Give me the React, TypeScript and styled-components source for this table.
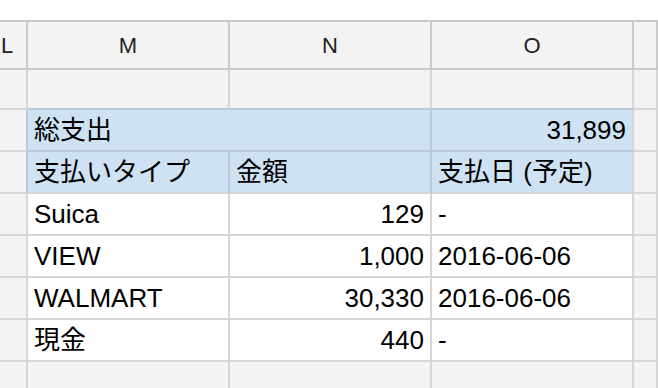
import React from "react";
import styled, { createGlobalStyle } from "styled-components";

const GRID = "#d6d6d6";
const HEAD_LINE = "#c9c9c9";
const BLUE = "#cfe2f3";
const BLUE_LINE = "#b9c9da";
const GRAY = "#f3f3f3";

const Global = createGlobalStyle`
  html, body { margin: 0; padding: 0; overflow: hidden; background: #fff; }
  body { font-family: "Liberation Sans", Arial, "Noto Sans CJK JP", sans-serif; }
`;

const Page = styled.div`
  padding-top: 20px;
  width: 658px;
  height: 388px;
  box-sizing: border-box;
`;

const Sheet = styled.div`
  display: grid;
  grid-template-columns: 28px 202px 202px 202px 1fr;
  grid-template-rows: 48px 40px repeat(7, 42px);
  border-top: 2px solid ${HEAD_LINE};
`;

type Align = "start" | "end" | "center";

const HeaderCell = styled.div<{ $align?: Align }>`
  box-sizing: border-box;
  display: flex;
  align-items: center;
  justify-content: ${(p) => (p.$align === "start" ? "flex-start" : "center")};
  padding-left: ${(p) => (p.$align === "start" ? "1px" : "0")};
  background: ${GRAY};
  border-right: 2px solid ${HEAD_LINE};
  border-bottom: 2px solid ${HEAD_LINE};
  font-size: 22px;
  line-height: 25px;
  color: #222;
  overflow: hidden;
`;

const Cell = styled.div<{
  $bg?: string;
  $align?: Align;
  $rb?: string;
  $bb?: string;
  $span?: number;
}>`
  box-sizing: border-box;
  display: flex;
  align-items: flex-end;
  justify-content: ${(p) => (p.$align === "end" ? "flex-end" : "flex-start")};
  padding: 0 6px 5px;
  grid-column: span ${(p) => p.$span ?? 1};
  background: ${(p) => p.$bg ?? "#fff"};
  border-right: 2px solid ${(p) => p.$rb ?? GRID};
  border-bottom: 2px solid ${(p) => p.$bb ?? GRID};
  font-family: "Liberation Sans", Arial, "Noto Sans CJK JP", sans-serif;
  font-size: 26px;
  line-height: 30px;
  color: #000;
  white-space: nowrap;
  overflow: hidden;
`;

const payments = [
  { type: "Suica", amount: "129", date: "-" },
  { type: "VIEW", amount: "1,000", date: "2016-06-06" },
  { type: "WALMART", amount: "30,330", date: "2016-06-06" },
  { type: "現金", amount: "440", date: "-" },
];

export default function App() {
  return (
    <Page>
      <Global />
      <Sheet>
        <HeaderCell $align="start">L</HeaderCell>
        <HeaderCell>M</HeaderCell>
        <HeaderCell>N</HeaderCell>
        <HeaderCell>O</HeaderCell>
        <HeaderCell />

        <Cell $bg={GRAY} />
        <Cell $bg={GRAY} $bb={BLUE_LINE} />
        <Cell $bg={GRAY} $bb={BLUE_LINE} />
        <Cell $bg={GRAY} $bb={BLUE_LINE} />
        <Cell $bg={GRAY} />

        <Cell $bg={GRAY} $rb={BLUE_LINE} />
        <Cell $bg={BLUE} $span={2} $rb={BLUE_LINE} $bb={BLUE_LINE}>
          総支出
        </Cell>
        <Cell $bg={BLUE} $align="end" $bb={BLUE_LINE}>
          31,899
        </Cell>
        <Cell $bg={GRAY} />

        <Cell $bg={GRAY} $rb={BLUE_LINE} />
        <Cell $bg={BLUE} $rb={BLUE_LINE}>
          支払いタイプ
        </Cell>
        <Cell $bg={BLUE} $rb={BLUE_LINE}>
          金額
        </Cell>
        <Cell $bg={BLUE}>支払日 (予定)</Cell>
        <Cell $bg={GRAY} />

        {payments.map((p) => (
          <React.Fragment key={p.type}>
            <Cell $bg={GRAY} />
            <Cell>{p.type}</Cell>
            <Cell $align="end">{p.amount}</Cell>
            <Cell>{p.date}</Cell>
            <Cell $bg={GRAY} />
          </React.Fragment>
        ))}

        <Cell $bg={GRAY} />
        <Cell $bg={GRAY} />
        <Cell $bg={GRAY} />
        <Cell $bg={GRAY} />
        <Cell $bg={GRAY} />
      </Sheet>
    </Page>
  );
}
